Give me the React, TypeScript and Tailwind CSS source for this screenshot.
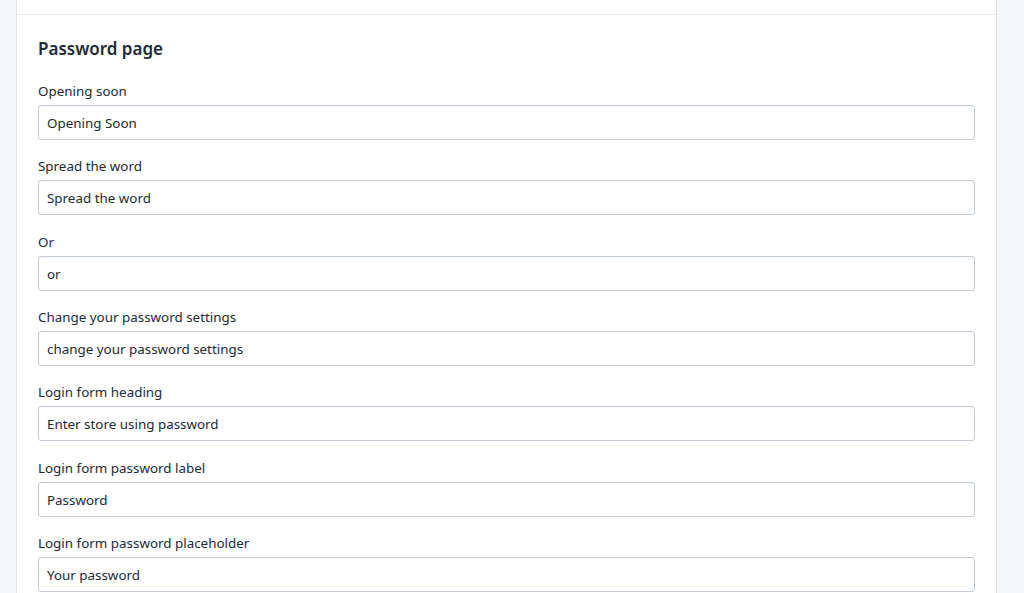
const fields = [
  { label: "Opening soon", value: "Opening Soon" },
  { label: "Spread the word", value: "Spread the word" },
  { label: "Or", value: "or" },
  { label: "Change your password settings", value: "change your password settings" },
  { label: "Login form heading", value: "Enter store using password" },
  { label: "Login form password label", value: "Password" },
  { label: "Login form password placeholder", value: "Your password" },
];

export default function App() {
  return (
    <div
      className="flex min-h-[593px] bg-[#f4f6f8] text-[#212b36]"
      style={{ fontFamily: '"Noto Sans", "Open Sans", sans-serif' }}
    >
      <div className="w-[16px] shrink-0" />
      <div className="flex-1 bg-white border-x border-[#e3e6e9]">
        <div className="h-[15px] border-b border-[#ebeef0]" />
        <section className="pl-[21px] pr-[21px] pt-[22px] pb-6">
          <h2 className="text-[17px] leading-[24px] font-semibold mb-[20px]">Password page</h2>
          <div className="flex flex-col gap-y-[16.33px]">
            {fields.map((f) => (
              <label key={f.label} className="block">
                <span className="block text-[13.4px] leading-[21px] mb-[3px]">{f.label}</span>
                <input
                  type="text"
                  defaultValue={f.value}
                  className="block w-full h-[35px] px-[8px] rounded-[3px] border border-[#c4cdd5] text-[13.4px] leading-[20px] pt-[1px] text-[#212b36] outline-none shadow-[inset_0_1px_0_0_rgba(99,115,129,0.05)]"
                  style={{ fontFamily: "inherit" }}
                />
              </label>
            ))}
          </div>
        </section>
      </div>
      <div className="w-[27px] shrink-0" />
    </div>
  );
}
